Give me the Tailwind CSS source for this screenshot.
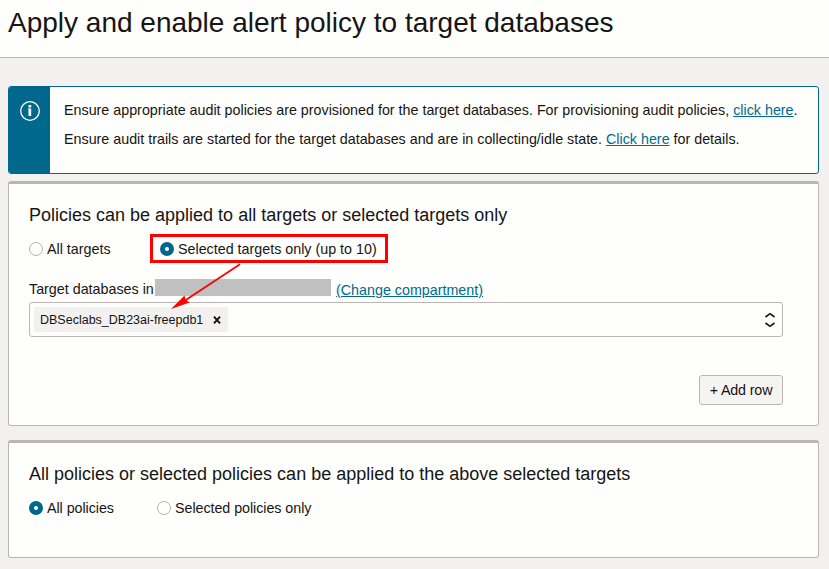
<!DOCTYPE html>
<html lang="en">
<head>
<meta charset="utf-8">
<title>Apply and enable alert policy</title>
<script src="https://cdn.jsdelivr.net/npm/@tailwindcss/browser@4"></script>
</head>
<body class="w-[829px] h-[569px] overflow-hidden bg-[#f3f1f0] text-[#161513] text-[14.3px] leading-5 font-['Liberation_Sans',Arial,sans-serif]">
<header class="h-[58px] border-b border-[#bbb6b1] bg-[#fefefc] pl-2 pt-[5px]">
  <h1 class="text-[28px] leading-9 whitespace-nowrap">Apply and enable alert policy to target databases</h1>
</header>
<main class="px-2 pt-7 w-[827px]">
  <section class="flex h-[88px] rounded-[3px] border border-[#00688c] bg-[#fefefc] overflow-hidden">
    <div class="w-[41px] shrink-0 bg-[#00688c] pl-[11px] pt-[14px]">
      <svg class="size-5" viewBox="0 0 20 20" fill="none"><circle cx="10" cy="10" r="9.3" stroke="#fff" stroke-width="1.3"/><path d="M8.500 4H11.200V6.500H8.500zM8.200 7.500H11.200V15H8.500V9H8.200z" fill="#fff"/></svg>
    </div>
    <div class="pl-[14px] pt-[13px] whitespace-nowrap">
      <p>Ensure appropriate audit policies are provisioned for the target databases. For provisioning audit policies, <a class="text-[#006b8f] underline">click here</a>.</p>
      <p class="mt-[9px]">Ensure audit trails are started for the target databases and are in collecting/idle state. <a class="text-[#006b8f] underline">Click here</a> for details.</p>
    </div>
  </section>
  <section class="mt-[7px] h-[245px] rounded-[3px] border border-t-3 border-[#bbb6b1] bg-[#fefefc] pl-5 pr-[35px] whitespace-nowrap">
    <h2 class="pt-[19px] text-[18px] leading-6">Policies can be applied to all targets or selected targets only</h2>
    <div class="mt-[7px] flex h-[29px] items-center">
      <label class="flex w-[121px] items-center gap-1"><span class="size-[14px] rounded-full border border-[#b5b1ae]"></span>All targets</label>
      <label class="flex h-[29px] w-[238px] items-center gap-1 border-3 border-[#fe0000] pl-[7px]"><span class="size-[14px] rounded-full border-5 border-[#00688c] bg-white"></span>Selected targets only (up to 10)</label>
    </div>
    <div class="mt-4 flex h-[23px]">
      <span class="w-[126px] leading-5">Target databases in</span>
      <span class="h-[17px] w-[176px] bg-[#c0c0c0]"></span>
      <a class="ml-[5px] mt-px text-[#006b8f] underline">(Change compartment)</a>
    </div>
    <div class="flex h-[35px] items-center justify-between rounded-[3px] border border-[#bbb6b1] pl-1 pr-[7px]">
      <div class="flex h-[25px] w-[194px] items-center rounded-[2px] bg-[#f2f1ef] pl-[6px] text-[12.5px]">
        <span class="w-[173px] pt-px">DBSeclabs_DB23ai-freepdb1</span>
        <svg class="size-2" viewBox="0 0 8 8" fill="none" stroke="#161513" stroke-width="2"><path d="M1 .7 7 7.3M7 .7 1 7.3"/></svg>
      </div>
      <svg class="h-[16px] w-[10px]" viewBox="0 0 10 16" fill="none" stroke="#161513" stroke-width="1.6"><path d="M.5 5 5 1.700 9.500 5M.5 11 5 14.300 9.500 11"/></svg>
    </div>
    <button class="mt-[38px] ml-auto flex h-[30px] w-[84px] items-center justify-center rounded-[3px] border border-[#bbb6b1] bg-[#f6f4f3] tracking-[-0.15px]">+ Add row</button>
  </section>
  <section class="mt-[14px] h-[118px] rounded-[3px] border border-t-3 border-[#bbb6b1] bg-[#fefefc] pl-5 whitespace-nowrap">
    <h2 class="pt-[19px] text-[18px] leading-6">All policies or selected policies can be applied to the above selected targets</h2>
    <div class="mt-3 flex h-5 items-center tracking-[-0.05px]">
      <label class="flex w-[128px] items-center gap-1"><span class="size-[14px] rounded-full border-5 border-[#00688c] bg-white"></span>All policies</label>
      <label class="flex items-center gap-1"><span class="size-[14px] rounded-full border border-[#b5b1ae]"></span>Selected policies only</label>
    </div>
  </section>
</main>
<svg class="absolute left-[168px] top-[260px] h-[52px] w-[76px]" viewBox="168 260 76 52"><path d="M240 264.300 185 300.500" stroke="#fe0000" stroke-width="1.8"/><path d="M171 309 184.500 295.500 185.500 299.500 189.500 302.500Z" fill="#fe0000"/></svg>
</body>
</html>
